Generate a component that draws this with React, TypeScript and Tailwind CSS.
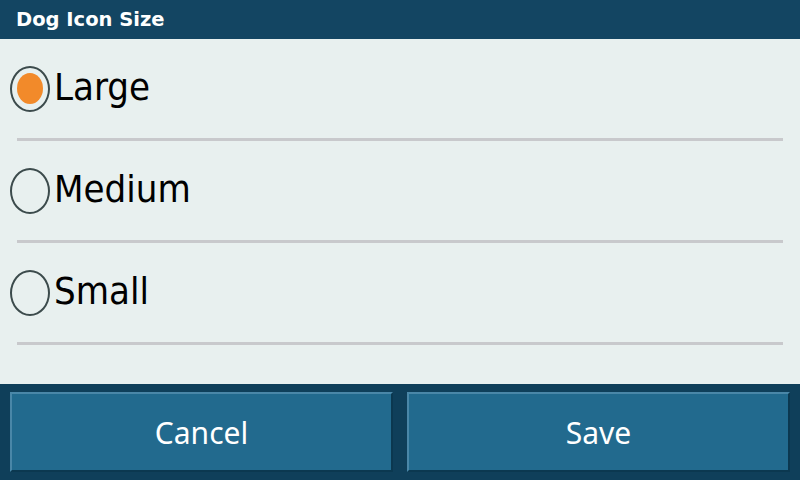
import { useState } from 'react';

const options = ['Large', 'Medium', 'Small'];

export default function App() {
  const [size, setSize] = useState('Large');

  return (
    <div className="w-[800px] h-[480px] flex flex-col bg-[#e8f0ef] font-['DejaVu_Sans',sans-serif] overflow-hidden">
      {/* header */}
      <div className="h-[39px] bg-[#134562] flex items-center px-4">
        <h1 className="text-white font-bold text-[19.5px] leading-none">Dog Icon Size</h1>
      </div>

      {/* options */}
      <div className="flex-1 flex flex-col">
        {options.map((opt) => (
          <div key={opt}>
            <button
              type="button"
              onClick={() => setSize(opt)}
              className="h-[99px] w-full flex items-center pl-[10px] gap-[4px] text-left"
            >
              <span className="w-[40px] h-[46px] rounded-[50%] border-2 border-[#3c4b4c] flex items-center justify-center shrink-0">
                {size === opt && <span className="w-[26px] h-[31px] rounded-[50%] bg-[#f28a2a]" />}
              </span>
              <span className="text-[38px] text-black leading-none font-['DejaVu_Sans_Condensed','DejaVu_Sans',sans-serif] [font-stretch:condensed] -mt-[4px]">
                {opt}
              </span>
            </button>
            <div className="mx-[17px] h-[3px] bg-[#c8c9cc]" />
          </div>
        ))}
      </div>

      {/* footer */}
      <div className="h-[96px] bg-[#0f3f5a] flex gap-[14px] px-[10px] py-[8px]">
        {['Cancel', 'Save'].map((label) => (
          <button
            key={label}
            type="button"
            className="flex-1 bg-[#226a8e] border-2 border-t-[#4a87a8] border-l-[#4a87a8] border-b-[#0b3850] border-r-[#0b3850] text-white text-[30px] font-['Noto_Sans',sans-serif] flex items-center justify-center"
          >
            {label}
          </button>
        ))}
      </div>
    </div>
  );
}
